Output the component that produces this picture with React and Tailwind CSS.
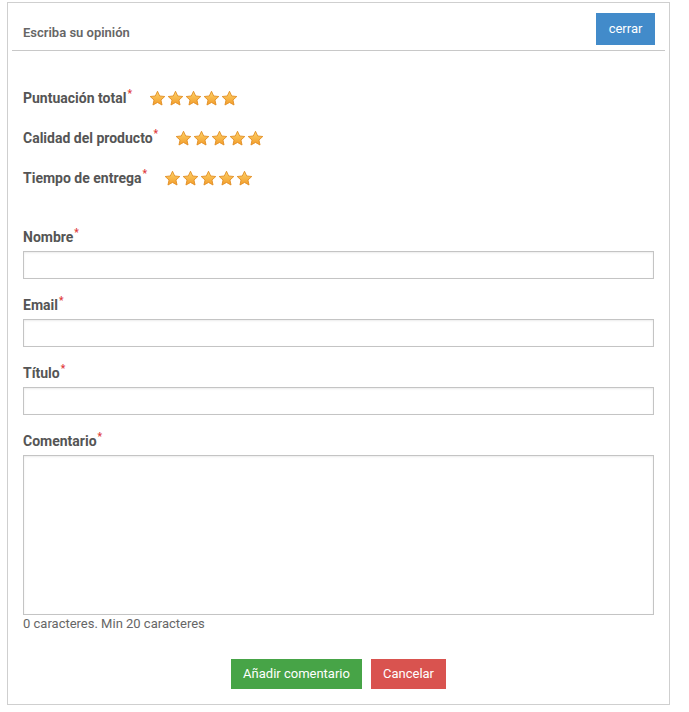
import React from "react";

const Star = () => (
  <svg width="17" height="17" viewBox="0 0 24 24">
    <defs>
      <linearGradient id="starFill" x1="0" y1="0" x2="0" y2="1">
        <stop offset="0%" stopColor="#fcd36a" />
        <stop offset="100%" stopColor="#f39c2a" />
      </linearGradient>
    </defs>
    <path
      d="M12 1.8l3.1 6.6 7.2.8-5.4 4.9 1.5 7.1L12 17.6l-6.4 3.6 1.5-7.1L1.7 9.2l7.2-.8z"
      fill="url(#starFill)"
      stroke="#e08a1e"
      strokeWidth="1.2"
      strokeLinejoin="round"
    />
  </svg>
);

const Req = () => (
  <span className="text-[#e03a3a] text-[10px] font-bold ml-[1px] relative -top-[6px]">*</span>
);

const RatingRow = ({ label }) => (
  <div className="flex items-center h-[40px]">
    <span className="text-[14px] font-bold text-[#555]">
      {label}
      <Req />
    </span>
    <div className="flex gap-[1px] ml-[17px]">
      <Star />
      <Star />
      <Star />
      <Star />
      <Star />
    </div>
  </div>
);

const Field = ({ label, children }) => (
  <div className="mb-[16px]">
    <label className="block text-[14px] font-bold text-[#555] h-[20px] leading-[20px] mb-[4px]">
      {label}
      <Req />
    </label>
    {children}
  </div>
);

export default function App() {
  return (
    <div className="bg-white" style={{ fontFamily: "Roboto, 'Liberation Sans', sans-serif" }}>
      <div className="ml-[7px] mt-[2px] w-[663px] h-[703px] border border-[#cfcfcf]">
        {/* header */}
        <div className="mx-[4px] flex items-end justify-between pl-[11px] pr-[10px] pt-[10px] pb-[5px] border-b border-[#c8c8c8]">
          <span className="text-[13px] font-semibold text-[#666] mb-[3px]">Escriba su opinión</span>
          <button className="bg-[#428bca] text-white text-[13px] w-[59px] h-[32px]">cerrar</button>
        </div>

        <div className="px-[15px] pt-[27px]">
          <RatingRow label="Puntuación total" />
          <RatingRow label="Calidad del producto" />
          <RatingRow label="Tiempo de entrega" />

          <div className="mt-[29px]">
            <Field label="Nombre">
              <input className="block w-full h-[28px] border border-[#c4c4c4] shadow-[inset_0_1px_2px_rgba(0,0,0,0.08)]" />
            </Field>
            <Field label="Email">
              <input className="block w-full h-[28px] border border-[#c4c4c4] shadow-[inset_0_1px_2px_rgba(0,0,0,0.08)]" />
            </Field>
            <Field label="Título">
              <input className="block w-full h-[28px] border border-[#c4c4c4] shadow-[inset_0_1px_2px_rgba(0,0,0,0.08)]" />
            </Field>
            <div>
              <label className="block text-[14px] font-bold text-[#555] h-[20px] leading-[20px] mb-[4px]">
                Comentario
                <Req />
              </label>
              <textarea className="block w-full h-[160px] border border-[#c4c4c4] resize-none shadow-[inset_0_1px_2px_rgba(0,0,0,0.08)]" />
              <p className="text-[13px] text-[#666] leading-[18px]">0 caracteres. Min 20 caracteres</p>
            </div>
          </div>

          <div className="flex justify-center gap-[9px] mt-[26px]">
            <button className="bg-[#47a447] text-white text-[13px] w-[131px] h-[30px]">Añadir comentario</button>
            <button className="bg-[#d9534f] text-white text-[13px] w-[75px] h-[30px]">Cancelar</button>
          </div>
        </div>
      </div>
    </div>
  );
}
